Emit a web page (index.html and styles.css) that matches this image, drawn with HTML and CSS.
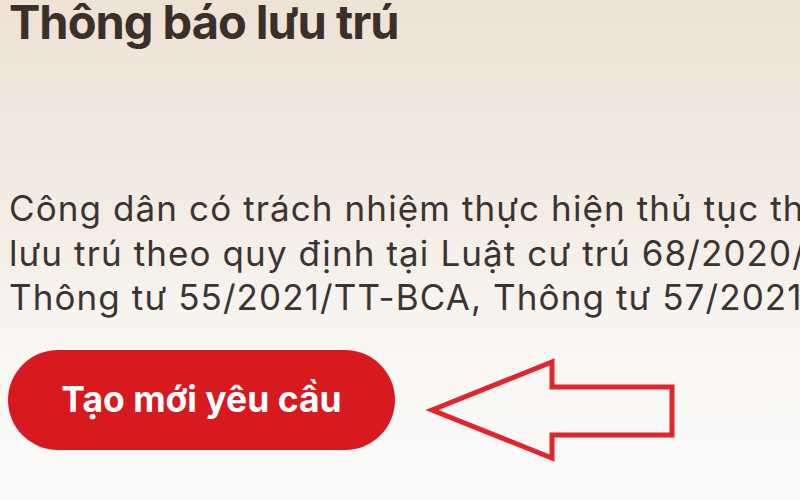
FILE: index.html
```html
<!DOCTYPE html>
<html lang="vi">
<head>
<meta charset="utf-8">
<title>Thông báo lưu trú</title>
<link rel="stylesheet" href="styles.css">
</head>
<body>
<main class="page">
  <h1 class="title">Thông báo lưu trú</h1>
  <p class="desc">
    <span class="line">Công dân có trách nhiệm thực hiện thủ tục thông báo</span>
    <span class="line">lưu trú theo quy định tại Luật cư trú 68/2020/QH14,</span>
    <span class="line">Thông tư 55/2021/TT-BCA, Thông tư 57/2021/TT-BCA</span>
  </p>
  <div class="action-row">
    <button class="btn">Tạo mới yêu cầu</button>
    <svg class="arrow" width="255" height="110" viewBox="0 0 255 110" aria-hidden="true">
      <polygon points="7,55 127,7 127,32 247,32 247,80 127,80 127,103" fill="none" stroke="#e0262d" stroke-width="5" stroke-linejoin="miter"/>
    </svg>
  </div>
</main>
</body>
</html>
```
FILE: styles.css
```css
html, body {
  margin: 0;
  padding: 0;
  width: 800px;
  height: 500px;
  overflow: hidden;
}
body {
  background: linear-gradient(180deg, #ede2d4 0%, #f3ece4 40%, #f9f6f3 70%, #fcfbfa 100%);
  font-family: Inter, "Liberation Sans", Arial, sans-serif;
}
.page {
  padding-left: 9px;
}
.title {
  margin: 0;
  font-size: 47px;
  line-height: 44px;
  font-weight: 700;
  color: #3a302b;
  letter-spacing: -1px;
  white-space: nowrap;
}
.desc {
  margin: 142px 0 0 0;
  font-size: 35px;
  line-height: 44.5px;
  color: #3b3431;
  letter-spacing: 1.1px;
}
.line {
  display: block;
  white-space: nowrap;
}
.action-row {
  display: flex;
  align-items: flex-start;
  margin-top: 30px;
}
.btn {
  margin-left: -1px;
  width: 387px;
  height: 100px;
  border: none;
  border-radius: 50px;
  background: #d71920;
  color: #ffffff;
  font-family: Inter, "Liberation Sans", Arial, sans-serif;
  font-size: 35.5px;
  font-weight: 700;
  padding: 0;
}
.arrow {
  display: block;
  margin-left: 30px;
  margin-top: 5px;
  flex: none;
}
```
